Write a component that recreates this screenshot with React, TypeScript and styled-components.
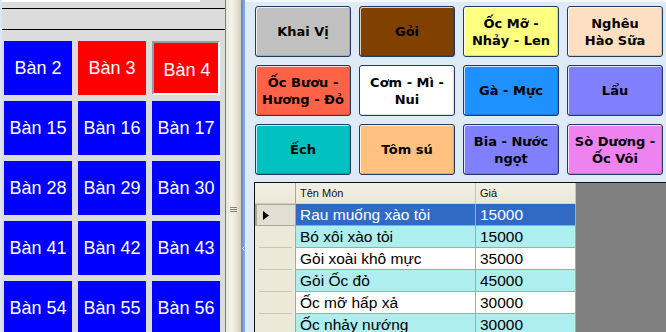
import React from 'react';
import styled, { createGlobalStyle } from 'styled-components';

const GlobalStyle = createGlobalStyle`
  html, body {
    margin: 0;
    padding: 0;
    background: #dfeaf7;
    overflow: hidden;
  }
  * {
    box-sizing: border-box;
  }
`;

interface TableItem {
  name: string;
  busy?: boolean;
  focused?: boolean;
}

interface CategoryItem {
  name: string;
  color: string;
}

interface DishItem {
  name: string;
  price: string;
}

const tables: TableItem[] = [
  { name: 'Bàn 2' },
  { name: 'Bàn 3', busy: true },
  { name: 'Bàn 4', busy: true, focused: true },
  { name: 'Bàn 15' },
  { name: 'Bàn 16' },
  { name: 'Bàn 17' },
  { name: 'Bàn 28' },
  { name: 'Bàn 29' },
  { name: 'Bàn 30' },
  { name: 'Bàn 41' },
  { name: 'Bàn 42' },
  { name: 'Bàn 43' },
  { name: 'Bàn 54' },
  { name: 'Bàn 55' },
  { name: 'Bàn 56' },
];

// line breaks follow the wrapping of the original buttons
const categories: CategoryItem[] = [
  { name: 'Khai Vị', color: '#c0c0c0' },
  { name: 'Gỏi', color: '#804000' },
  { name: 'Ốc Mỡ -\nNhảy - Len', color: '#ffff80' },
  { name: 'Nghêu\nHào Sữa', color: '#ffdfc1' },
  { name: 'Ốc Bươu -\nHương - Đỏ', color: '#ff6347' },
  { name: 'Cơm - Mì -\nNui', color: '#ffffff' },
  { name: 'Gà - Mực', color: '#1e90ff' },
  { name: 'Lẩu', color: '#8080ff' },
  { name: 'Ếch', color: '#00c0c0' },
  { name: 'Tôm sú', color: '#ffc080' },
  { name: 'Bia - Nước\nngọt', color: '#8080ff' },
  { name: 'Sò Dương -\nỐc Vôi', color: '#ee82ee' },
];

const dishes: DishItem[] = [
  { name: 'Rau muống xào tỏi', price: '15000' },
  { name: 'Bó xôi xào tỏi', price: '15000' },
  { name: 'Gỏi xoài khô mực', price: '35000' },
  { name: 'Gỏi Ốc đỏ', price: '45000' },
  { name: 'Ốc mỡ hấp xả', price: '30000' },
  { name: 'Ốc nhảy nướng', price: '30000' },
];

const Window = styled.div`
  display: flex;
  width: 666px;
  height: 332px;
  overflow: hidden;
  background: #dfeaf7;
`;

const FormEdge = styled.div`
  width: 2px;
  flex: none;
  background: #dbe7f4;
`;

const TablePanel = styled.div`
  width: 224px;
  flex: none;
  display: flex;
  flex-direction: column;
  background: #dcdcdc;
  border-right: 1px solid #7d7d7d;
  overflow: hidden;
`;

const SearchBottom = styled.div`
  flex: none;
  width: 198px;
  height: 2px;
  background: #ffffff;
`;

const AreaStrip = styled.div`
  flex: none;
  height: 22px;
  margin-top: 6px;
  border-top: 1px solid #000000;
  border-bottom: 1px solid #000000;
`;

const TableGrid = styled.div`
  flex: none;
  display: grid;
  grid-template-columns: repeat(3, 68px);
  grid-auto-rows: 54px;
  gap: 6px;
  padding: 11px 0 0 2px;
`;

const TableButton = styled.div<{ $busy?: boolean; $focused?: boolean }>`
  display: flex;
  align-items: center;
  justify-content: center;
  background: ${(p) => (p.$busy ? '#ff0000' : '#0000ff')};
  color: #ffffff;
  font-family: 'Liberation Sans', Arial, sans-serif;
  font-size: 18px;
  white-space: nowrap;
  ${(p) =>
    p.$focused &&
    `
    border: 2px solid;
    border-color: #9a9a9a #ffffff #ffffff #9a9a9a;
    padding: 4px 0 0 2px;
  `}
`;

const Splitter = styled.div`
  width: 15px;
  flex: none;
  display: flex;
  flex-direction: column;
  align-items: center;
  padding-top: 207px;
  background: linear-gradient(to right, #e9e6d9, #f5f3eb 35%, #e7e3d5 70%, #d2ccb9);
`;

const Grip = styled.svg`
  display: block;
`;

const EdgeBar = styled.div`
  width: 4px;
  flex: none;
  display: flex;
  flex-direction: column;
  align-items: flex-end;
  padding-top: 246px;
  background: linear-gradient(to right, #5a85d1, #8eb0e4);
`;

const MenuPanel = styled.div`
  flex: 1;
  display: flex;
  flex-direction: column;
  border-top: 2px solid #f4f8fd;
`;

const CategoryGrid = styled.div`
  flex: none;
  display: grid;
  grid-template-columns: repeat(4, 96px);
  grid-auto-rows: 51px;
  gap: 8px;
  padding: 4px 0 0 10px;
`;

const CategoryButton = styled.div<{ $color: string }>`
  display: flex;
  align-items: center;
  justify-content: center;
  text-align: center;
  white-space: pre-line;
  background: ${(p) => p.$color};
  border: 1px solid #1f3c63;
  border-radius: 3px;
  box-shadow: inset 1px 1px 0 rgba(255, 255, 255, 0.75), inset -1px -1px 0 rgba(0, 0, 0, 0.12);
  color: #000000;
  font-family: 'DejaVu Sans', Tahoma, sans-serif;
  font-weight: bold;
  font-size: 13px;
  line-height: 17px;
`;

const DishGrid = styled.div`
  flex: 1;
  margin: 7px 0 0 9px;
  border-top: 1px solid #111111;
  border-left: 1px solid #111111;
  background: #808080;
`;

const GridTable = styled.div`
  display: grid;
  grid-template-columns: 41px 180px 100px;
  grid-template-rows: 21px;
  grid-auto-rows: 22px;
  width: 321px;
`;

const HeaderCell = styled.div<{ $corner?: boolean }>`
  display: flex;
  align-items: center;
  padding-left: 4px;
  background: linear-gradient(#f2f0e5, #ebe8d8);
  border-bottom: 1px solid #d4d0c0;
  border-right: 1px solid ${(p) => (p.$corner ? '#aca899' : '#c8c4b4')};
  font-family: 'Liberation Sans', Arial, sans-serif;
  font-size: 11px;
  color: #111111;
`;

const RowHeader = styled.div<{ $current?: boolean }>`
  position: relative;
  display: flex;
  align-items: center;
  padding-left: 6px;
  background: ${(p) => (p.$current ? '#e2dfd2' : '#ece9d8')};
  border-right: 1px solid #aca899;
  ${(p) =>
    p.$current
      ? 'border: 1px solid #aca899; border-left-width: 2px;'
      : `
    &::after {
      content: '';
      position: absolute;
      left: 4px;
      right: 3px;
      bottom: 0;
      height: 1px;
      background: #c9c5b3;
    }
  `}
`;

const Cell = styled.div<{ $tone: 'selected' | 'cyan' | 'white' }>`
  display: flex;
  align-items: center;
  padding-left: 4px;
  background: ${(p) => (p.$tone === 'selected' ? '#316ac5' : p.$tone === 'cyan' ? '#afeeee' : '#ffffff')};
  color: ${(p) => (p.$tone === 'selected' ? '#ffffff' : '#000000')};
  border-right: 1px solid #aca899;
  border-bottom: 1px solid #aca899;
  font-family: 'Liberation Sans', Arial, sans-serif;
  font-size: 15.5px;
  white-space: nowrap;
  overflow: hidden;
`;

function toneOf(index: number): 'selected' | 'cyan' | 'white' {
  if (index === 0) return 'selected';
  return index % 2 === 1 ? 'cyan' : 'white';
}

export default function App(): React.ReactElement {
  return (
    <>
      <GlobalStyle />
      <Window>
        <FormEdge />
        <TablePanel>
          <SearchBottom />
          <AreaStrip />
          <TableGrid>
            {tables.map((t) => (
              <TableButton key={t.name} $busy={t.busy} $focused={t.focused}>
                {t.name}
              </TableButton>
            ))}
          </TableGrid>
        </TablePanel>

        <Splitter>
          <Grip width="7" height="6" viewBox="0 0 7 6">
            <rect x="0" y="0" width="7" height="1" fill="#8a8170" />
            <rect x="0" y="2" width="7" height="1" fill="#8a8170" />
            <rect x="0" y="4" width="7" height="1" fill="#8a8170" />
          </Grip>
        </Splitter>

        <EdgeBar>
          <Grip width="3" height="5" viewBox="0 0 3 5">
            <polyline points="2.5,0.5 0.5,2.5 2.5,4.5" fill="none" stroke="#e8f0fb" strokeWidth="1" />
          </Grip>
        </EdgeBar>

        <MenuPanel>
          <CategoryGrid>
            {categories.map((c) => (
              <CategoryButton key={c.name} $color={c.color}>
                {c.name}
              </CategoryButton>
            ))}
          </CategoryGrid>

          <DishGrid>
            <GridTable>
              <HeaderCell $corner />
              <HeaderCell>Tên Món</HeaderCell>
              <HeaderCell>Giá</HeaderCell>
              {dishes.map((d, i) => (
                <React.Fragment key={d.name}>
                  <RowHeader $current={i === 0}>
                    {i === 0 && (
                      <svg width="6" height="9" viewBox="0 0 6 9">
                        <polygon points="0,0 6,4.5 0,9" fill="#000000" />
                      </svg>
                    )}
                  </RowHeader>
                  <Cell $tone={toneOf(i)}>{d.name}</Cell>
                  <Cell $tone={toneOf(i)}>{d.price}</Cell>
                </React.Fragment>
              ))}
            </GridTable>
          </DishGrid>
        </MenuPanel>
      </Window>
    </>
  );
}
